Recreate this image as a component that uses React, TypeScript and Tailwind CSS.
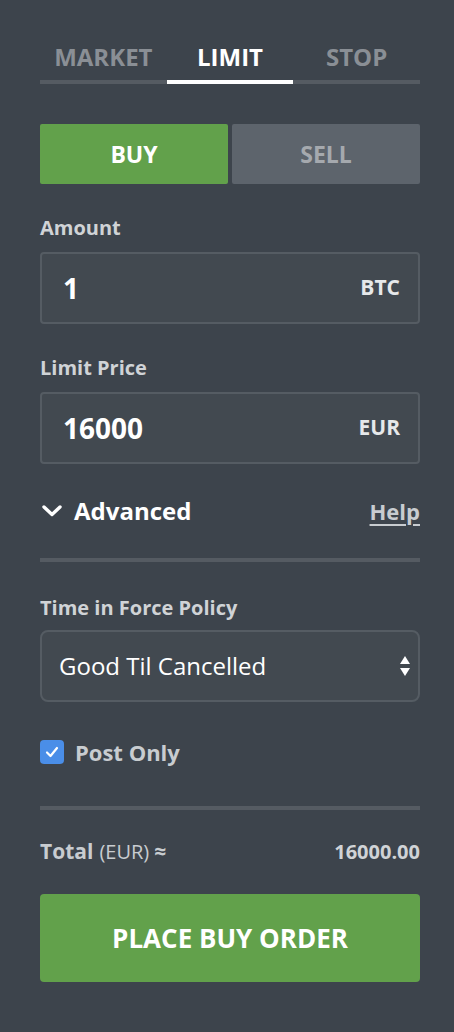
import React from "react";

export default function App() {
  return (
    <div className="min-h-[1032px] w-[454px] bg-[#3d444c] pl-[40px] pr-[34px] pt-[38px] font-['Open_Sans',sans-serif]">
      {/* Tabs */}
      <div className="grid grid-cols-3">
        {["MARKET", "LIMIT", "STOP"].map((t) => {
          const active = t === "LIMIT";
          return (
            <div key={t} className="flex flex-col items-center">
              <div className={`h-[38px] text-[24px] font-bold leading-[38px] ${active ? "text-white" : "text-[#8a8f95]"}`}>{t}</div>
              <div className={`mt-[4px] h-[4px] w-full ${active ? "bg-white" : "bg-[#555b62]"}`} />
            </div>
          );
        })}
      </div>

      {/* Buy/Sell */}
      <div className="mt-[40px] flex gap-[4px]">
        <div className="flex h-[60px] flex-1 items-center justify-center rounded-[2px] bg-[#62a14b] text-[23px] font-bold text-white">BUY</div>
        <div className="flex h-[60px] flex-1 items-center justify-center rounded-[2px] bg-[#5d646c] text-[23px] font-bold text-[#a5a9ae]">SELL</div>
      </div>

      {/* Amount */}
      <div className="mt-[32px] text-[20px] font-bold leading-[24px] text-[#d0d3d6]">Amount</div>
      <div className="mt-[12px] flex h-[72px] items-center justify-between rounded-[4px] border-2 border-[#555c63] bg-[#424950] pl-[21px] pr-[18px]">
        <span className="text-[28px] font-bold text-white">1</span>
        <span className="text-[21px] font-bold text-[#e6e8ea]">BTC</span>
      </div>

      {/* Limit Price */}
      <div className="mt-[32px] text-[20px] font-bold leading-[24px] text-[#d0d3d6]">Limit Price</div>
      <div className="mt-[12px] flex h-[72px] items-center justify-between rounded-[4px] border-2 border-[#555c63] bg-[#424950] pl-[21px] pr-[18px]">
        <span className="text-[28px] font-bold text-white">16000</span>
        <span className="text-[21px] font-bold text-[#e6e8ea]">EUR</span>
      </div>

      {/* Advanced */}
      <div className="mt-[30px] flex h-[34px] items-center justify-between">
        <div className="flex items-center">
          <svg width="22" height="14" viewBox="0 0 22 14" className="ml-[1px]">
            <path d="M3 3 L11 10.5 L19 3" stroke="white" strokeWidth="3.4" fill="none" strokeLinecap="round" strokeLinejoin="round" />
          </svg>
          <span className="ml-[11px] text-[24px] font-bold text-white">Advanced</span>
        </div>
        <span className="text-[22px] font-bold text-[#c8ccd0] underline decoration-[2px] underline-offset-[4px]">Help</span>
      </div>
      <div className="mt-[30px] h-[4px] w-full bg-[#555b62]" />

      {/* Time in Force */}
      <div className="mt-[34px] text-[20px] font-bold leading-[24px] text-[#d0d3d6]">Time in Force Policy</div>
      <div className="mt-[10px] flex h-[72px] items-center justify-between rounded-[8px] border-2 border-[#555c63] bg-[#424950] pl-[17px] pr-[8px]">
        <span className="text-[24px] text-white">Good Til Cancelled</span>
        <svg width="10" height="22" viewBox="0 0 10 22">
          <path d="M5 1 L10 9 L0 9 Z" fill="white" />
          <path d="M5 21 L10 13 L0 13 Z" fill="white" />
        </svg>
      </div>

      {/* Post Only */}
      <div className="mt-[38px] flex h-[24px] items-center">
        <div className="flex h-[24px] w-[24px] items-center justify-center rounded-[4px] bg-[#4a8ee8]">
          <svg width="16" height="16" viewBox="0 0 16 16">
            <path d="M3 8.5 L6.5 12 L13 4" stroke="white" strokeWidth="2.2" fill="none" strokeLinecap="round" strokeLinejoin="round" />
          </svg>
        </div>
        <span className="ml-[11px] text-[22px] font-bold leading-none text-[#c8ccd0]">Post Only</span>
      </div>
      <div className="mt-[42px] h-[4px] w-full bg-[#555b62]" />

      {/* Total */}
      <div className="mt-[28px] flex h-[28px] items-center justify-between">
        <div className="flex items-baseline text-[#c8ccd0]">
          <span className="text-[21px] font-bold">Total</span>
          <span className="ml-[6px] text-[20px]">(EUR)</span>
          <span className="ml-[5px] text-[21px] font-bold">≈</span>
        </div>
        <span className="text-[20px] font-bold text-[#d0d3d6]">16000.00</span>
      </div>

      {/* Place order */}
      <div className="mt-[28px] flex h-[88px] items-center justify-center rounded-[4px] bg-[#62a14b] text-[26px] font-bold text-white">
        PLACE BUY ORDER
      </div>
    </div>
  );
}
